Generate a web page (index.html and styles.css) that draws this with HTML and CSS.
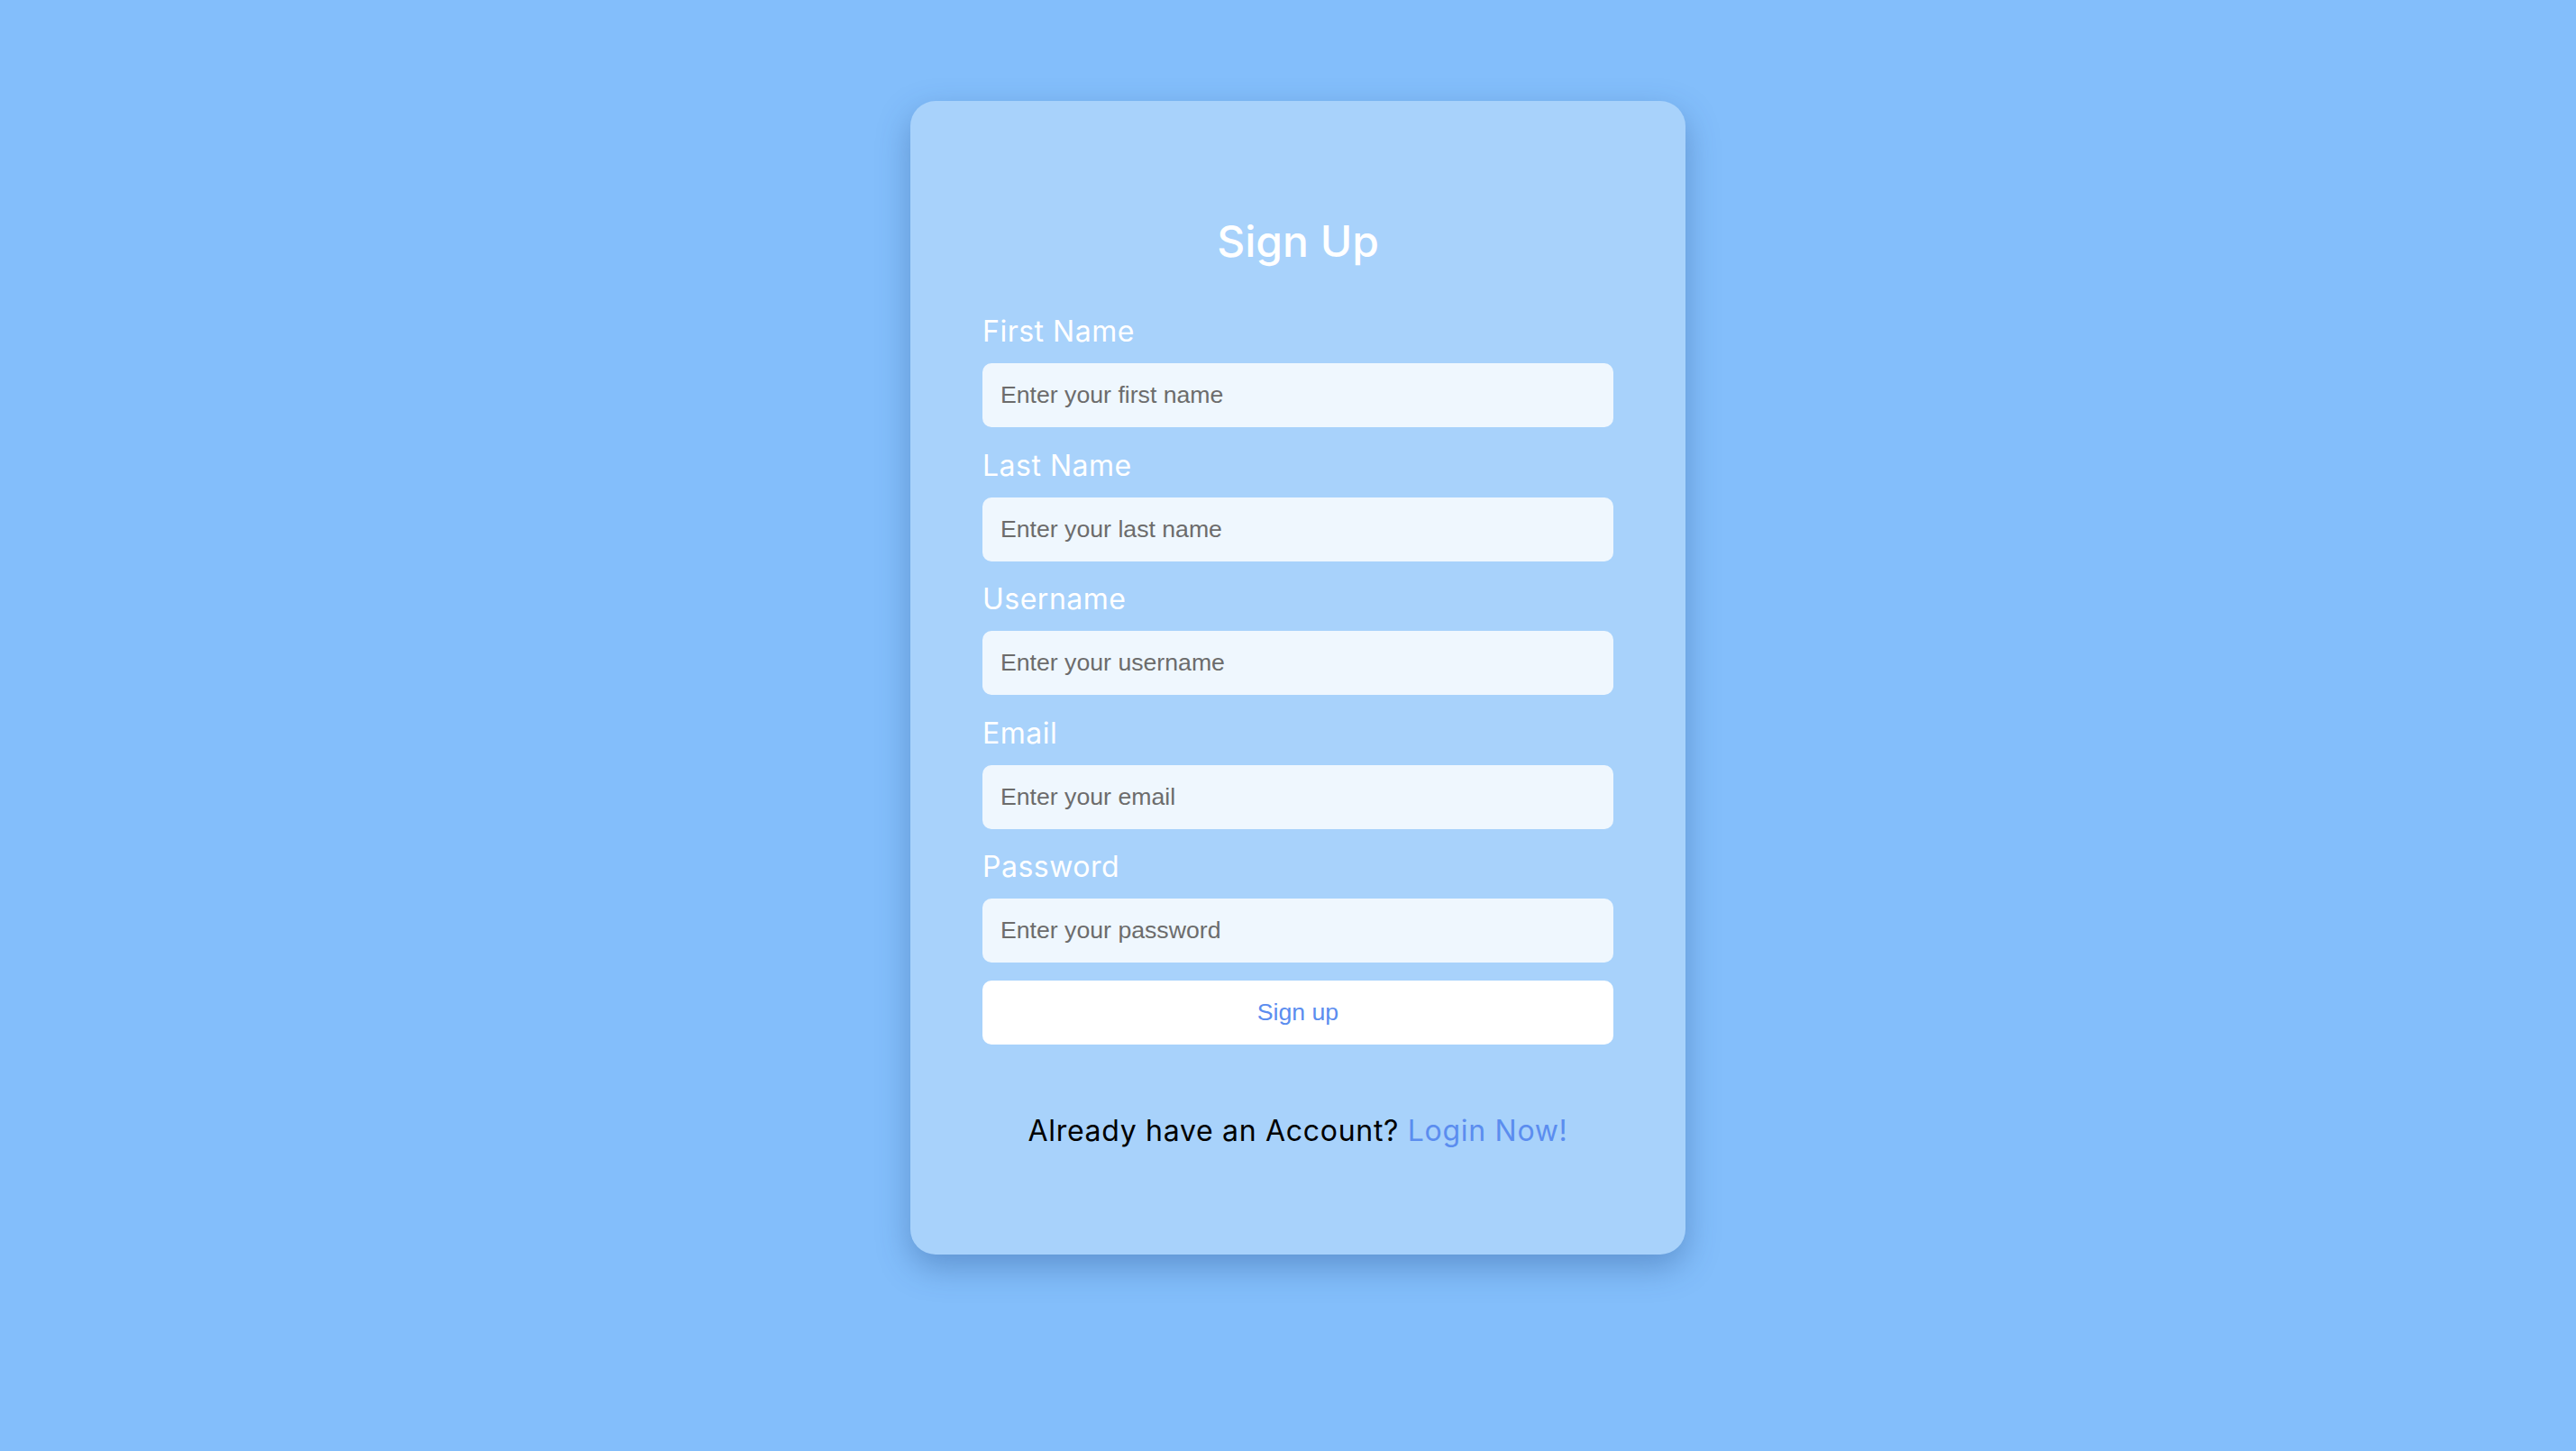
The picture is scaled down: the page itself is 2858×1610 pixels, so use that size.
FILE: index.html
```html
<!DOCTYPE html>
<html lang="en">
<head>
<meta charset="utf-8">
<title>Sign Up</title>
<link rel="stylesheet" href="styles.css">
</head>
<body>
<main class="page">
  <form class="card">
    <h1 class="title">Sign Up</h1>
    <div class="field">
      <label class="label" for="first">First Name</label>
      <input class="input" id="first" type="text" placeholder="Enter your first name">
    </div>
    <div class="field">
      <label class="label" for="last">Last Name</label>
      <input class="input" id="last" type="text" placeholder="Enter your last name">
    </div>
    <div class="field">
      <label class="label" for="user">Username</label>
      <input class="input" id="user" type="text" placeholder="Enter your username">
    </div>
    <div class="field">
      <label class="label" for="email">Email</label>
      <input class="input" id="email" type="email" placeholder="Enter your email">
    </div>
    <div class="field last-field">
      <label class="label" for="pass">Password</label>
      <input class="input" id="pass" type="password" placeholder="Enter your password">
    </div>
    <button class="submit" type="button">Sign up</button>
    <p class="footer">Already have an Account? <a class="login" href="#">Login Now!</a></p>
  </form>
</main>
</body>
</html>
```
FILE: styles.css
```css
* {
  box-sizing: border-box;
}

html, body {
  margin: 0;
  padding: 0;
}

body {
  background: #83befb;
  font-family: Inter, "Liberation Sans", sans-serif;
  min-height: 1610px;
}

.page {
  display: flex;
  justify-content: center;
  align-items: flex-start;
  padding: 112px 0 0 22px;
}

.card {
  width: 860px;
  height: 1280px;
  background: #a8d2fb;
  border-radius: 28px;
  padding: 120px 80px 0;
  box-shadow: 0 14px 36px rgba(30, 70, 130, 0.35);
  display: flex;
  flex-direction: column;
}

.title {
  margin: 0 0 40px;
  font-size: 48px;
  line-height: 72px;
  font-weight: 500;
  color: #ffffff;
  text-align: center;
}

.field {
  display: flex;
  flex-direction: column;
  margin-bottom: 18.6px;
}

.field.last-field {
  margin-bottom: 20px;
}

.label {
  font-size: 32px;
  line-height: 48px;
  font-weight: 400;
  letter-spacing: 0.5px;
  color: #ffffff;
  margin-bottom: 11px;
}

.input {
  width: 700px;
  height: 71px;
  border: none;
  border-radius: 10px;
  background: #eff7fe;
  padding: 0 20px;
  font-family: "Liberation Sans", Arial, sans-serif;
  font-size: 26.67px;
  color: #333333;
  outline: none;
}

.input::placeholder {
  color: #6c6c6c;
}

.submit {
  width: 700px;
  height: 71px;
  border: none;
  border-radius: 10px;
  background: #ffffff;
  font-family: "Liberation Sans", Arial, sans-serif;
  font-size: 26.67px;
  color: #5b8def;
  cursor: pointer;
}

.footer {
  margin: 72px 0 0;
  font-size: 32px;
  line-height: 48px;
  letter-spacing: 0.7px;
  color: #000000;
  text-align: center;
}

.login {
  color: #5b8def;
  text-decoration: none;
}
```
